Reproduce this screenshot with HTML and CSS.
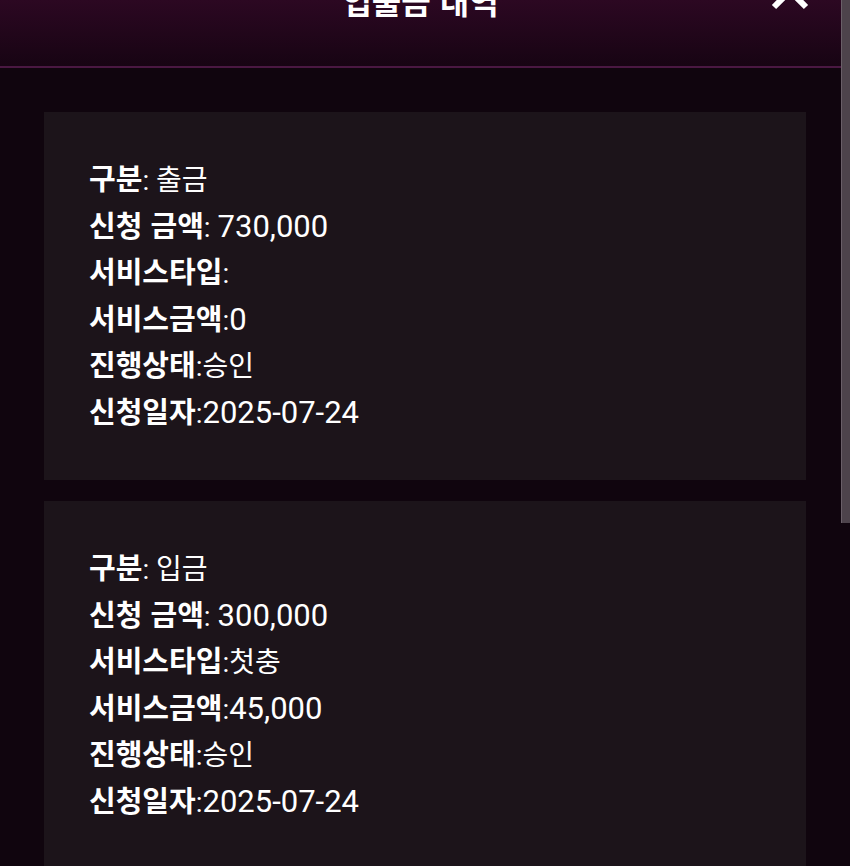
FILE: index.html
```html
<!DOCTYPE html>
<html lang="ko">
<head>
    <meta charset="UTF-8" />
    <meta name="viewport" content="width=device-width, initial-scale=1.0" />
    <title>입출금 내역</title>
    <link rel="stylesheet" href="styles.css">
</head>
<body>
    <div class="modal">
        <div class="modal-header">
            <div class="header-row">
                <span></span>
                <h2 class="modal-title">입출금 내역</h2>
                <button type="button" class="close-btn" aria-label="닫기">
                    <svg width="40" height="40" viewBox="0 0 40 40">
                        <path d="M4 4 L36 36 M36 4 L4 36" stroke="#ffffff" stroke-width="6" fill="none" />
                    </svg>
                </button>
            </div>
        </div>

        <div class="history-list">
            <div class="history-card">
                <div class="row"><span class="label">구분</span><span class="value">: 출금</span></div>
                <div class="row"><span class="label">신청 금액</span><span class="value">: <span class="num">730,000</span></span></div>
                <div class="row"><span class="label">서비스타입</span><span class="value">:</span></div>
                <div class="row"><span class="label">서비스금액</span><span class="value">:<span class="num">0</span></span></div>
                <div class="row"><span class="label">진행상태</span><span class="value">:승인</span></div>
                <div class="row"><span class="label">신청일자</span><span class="value">:<span class="num">2025-07-24</span></span></div>
            </div>

            <div class="history-card">
                <div class="row"><span class="label">구분</span><span class="value">: 입금</span></div>
                <div class="row"><span class="label">신청 금액</span><span class="value">: <span class="num">300,000</span></span></div>
                <div class="row"><span class="label">서비스타입</span><span class="value">:첫충</span></div>
                <div class="row"><span class="label">서비스금액</span><span class="value">:<span class="num">45,000</span></span></div>
                <div class="row"><span class="label">진행상태</span><span class="value">:승인</span></div>
                <div class="row"><span class="label">신청일자</span><span class="value">:<span class="num">2025-07-24</span></span></div>
            </div>
        </div>
    </div>

    <div class="scroll-track">
        <div class="scroll-thumb"></div>
    </div>
</body>
</html>
```

FILE: styles.css
```css
* {
    box-sizing: border-box;
}

body {
    margin: 0;
    height: 100vh;
    overflow: hidden;
    display: flex;
    background-color: #10050e;
    font-family: Roboto, "Noto Sans CJK KR", sans-serif;
    color: #ffffff;
}

.modal {
    flex: 1;
    display: flex;
    flex-direction: column;
}

.modal-header {
    height: 68px;
    flex-shrink: 0;
    overflow: hidden;
    background: linear-gradient(to bottom, #2c0822, #170413);
    border-bottom: 2px solid #4a1842;
}

.header-row {
    height: 62px;
    margin-top: -40px;
    display: grid;
    grid-template-columns: 1fr auto 1fr;
    align-items: center;
}

.modal-title {
    margin: 0;
    padding-top: 18px;
    font-family: "Noto Sans CJK KR", sans-serif;
    font-size: 32px;
    font-weight: bold;
    line-height: 1;
}

.close-btn {
    justify-self: end;
    margin-right: 31px;
    padding: 0;
    background: none;
    border: none;
    display: flex;
}

.history-list {
    padding: 44px 35px 0 44px;
    display: flex;
    flex-direction: column;
    gap: 21px;
}

.history-card {
    background-color: #1c141a;
    padding: 42px 45px 47px;
    flex-shrink: 0;
}

.row {
    height: 46.5px;
    line-height: 46.5px;
    white-space: nowrap;
}

.label {
    font-family: "Noto Sans CJK KR", sans-serif;
    font-size: 29px;
    font-weight: bold;
}

.value {
    font-family: Roboto, "Noto Sans CJK KR", sans-serif;
    font-size: 28px;
}

.num {
    font-size: 31px;
}

.scroll-track {
    width: 9px;
    flex-shrink: 0;
}

.scroll-thumb {
    height: 523px;
    background-color: #4d434b;
    border-left: 1px solid #6a5f68;
}
```
